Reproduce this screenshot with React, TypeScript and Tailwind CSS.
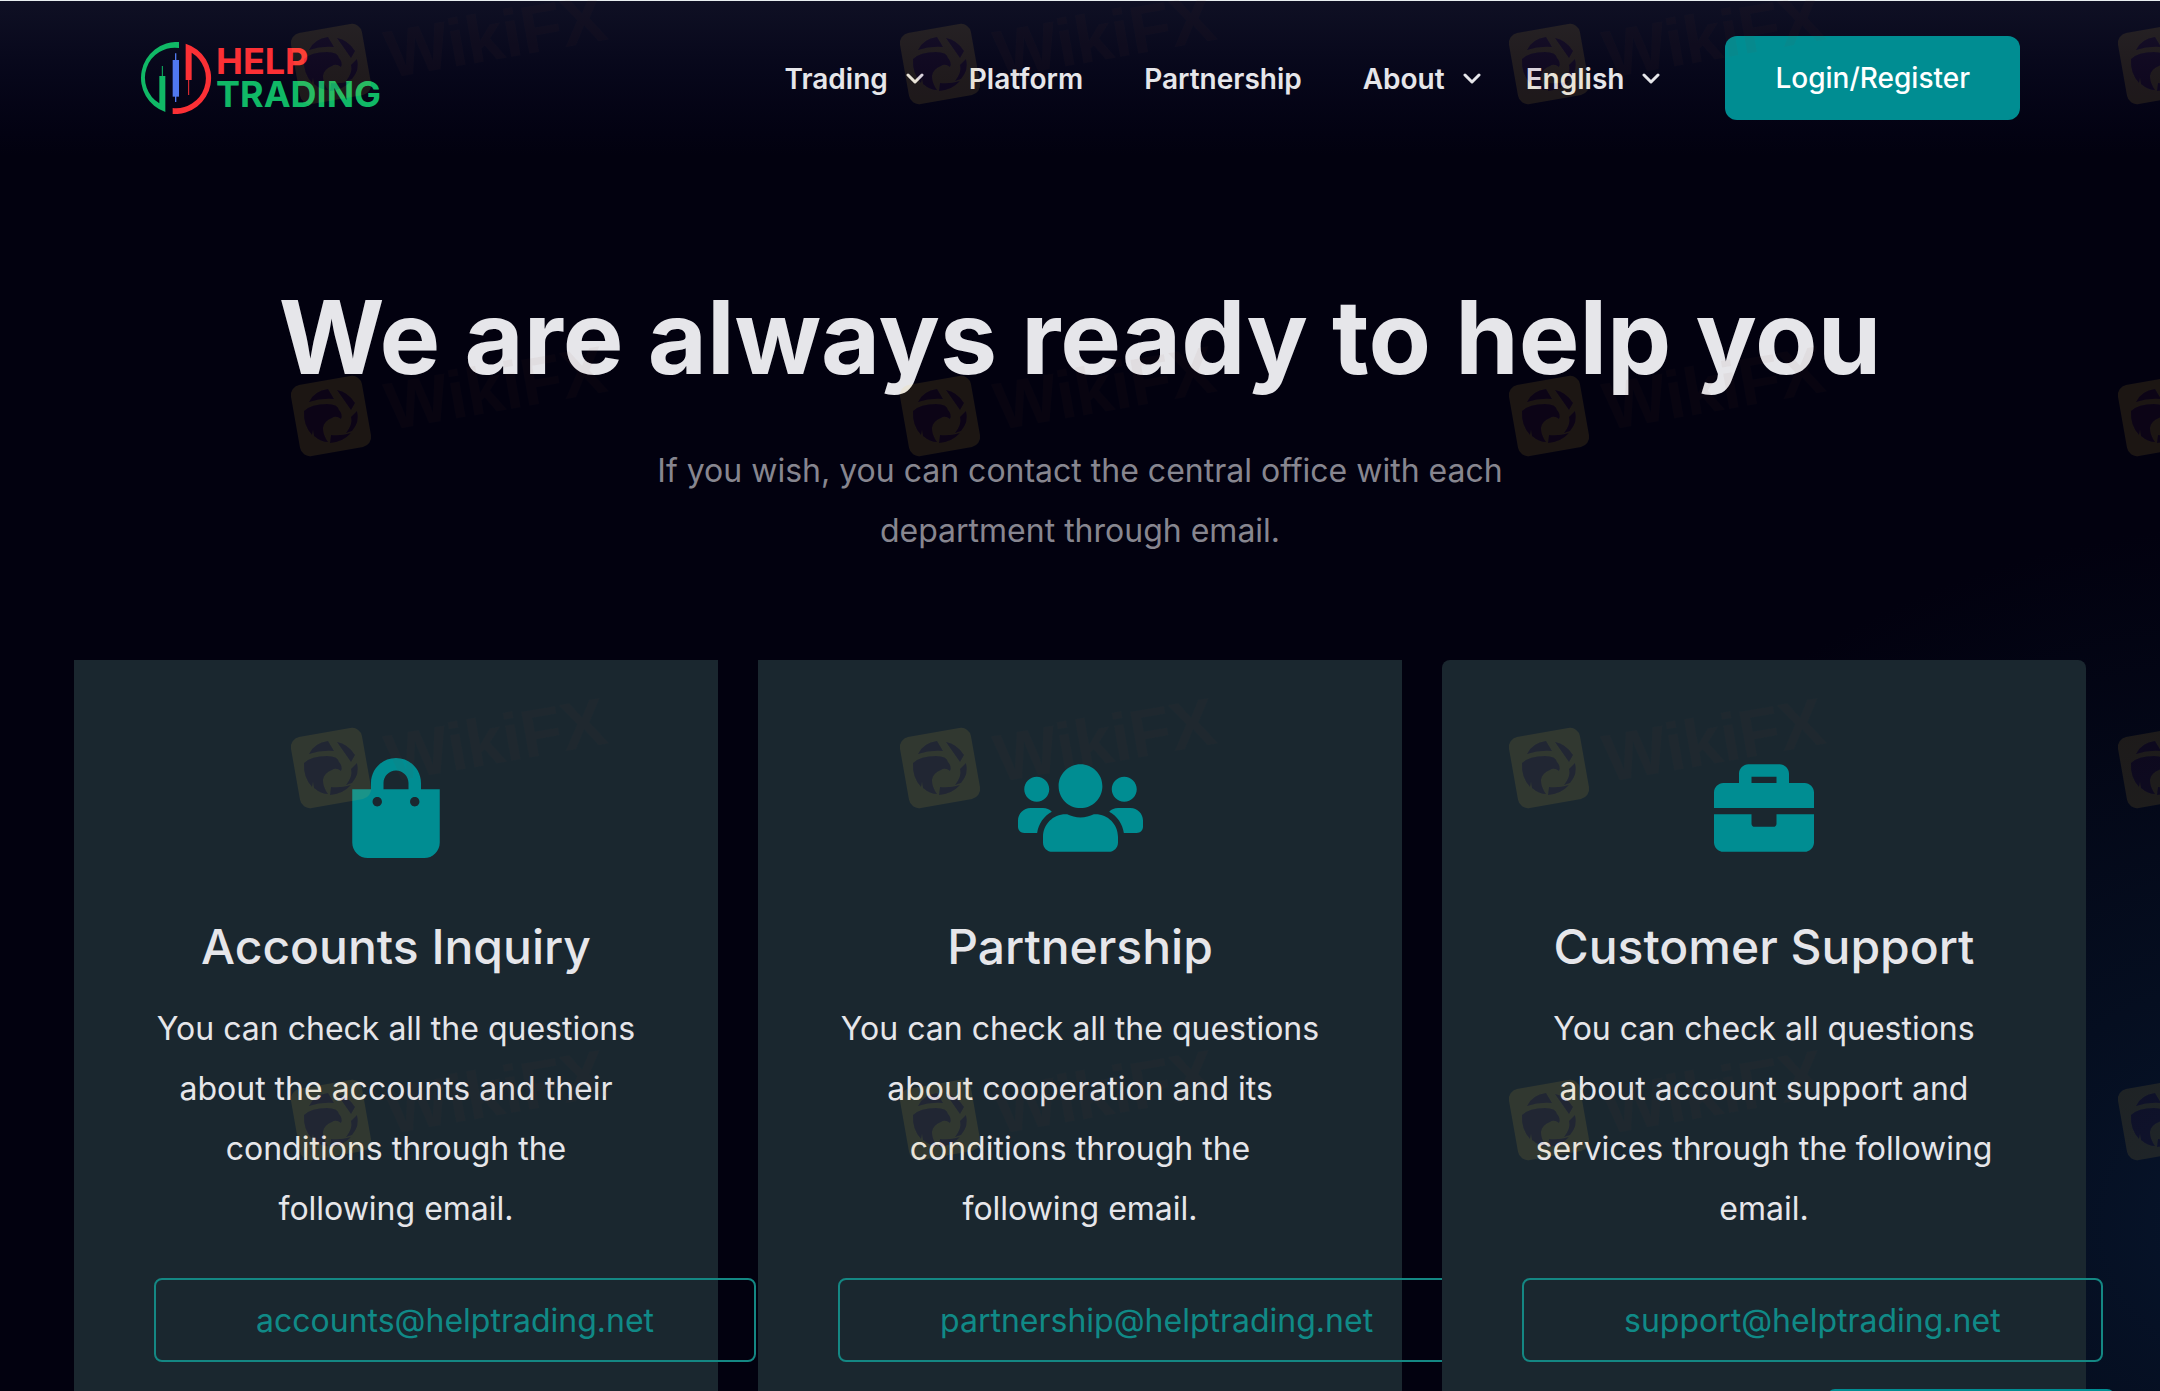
import React from "react";
import { FaBriefcase, FaShoppingBag, FaUsers } from "react-icons/fa";
import type { IconType } from "react-icons";

type Contact = {
  title: string;
  text: string;
  email: string;
  icon: IconType;
  iconClass: string;
  cardClass: string;
};

const contacts: Contact[] = [
  {
    title: "Accounts Inquiry",
    text: "You can check all the questions about the accounts and their conditions through the following email.",
    email: "accounts@helptrading.net",
    icon: FaShoppingBag,
    iconClass: "h-[100px] w-[88px]",
    cardClass: "",
  },
  {
    title: "Partnership",
    text: "You can check all the questions about cooperation and its conditions through the following email.",
    email: "partnership@helptrading.net",
    icon: FaUsers,
    iconClass: "h-[100px] w-[125px]",
    cardClass: "",
  },
  {
    title: "Customer Support",
    text: "You can check all questions about account support and services through the following email.",
    email: "support@helptrading.net",
    icon: FaBriefcase,
    iconClass: "h-[100px] w-[100px]",
    cardClass: "rounded-lg",
  },
];

const birdPath =
  "M-22 -14Q-17 -25 -3 -27L3 -17Q-10 -18 -22 -14ZM6 -26Q17 -24 24 -13L20 -6ZM26 -5Q29 6 21 15L15 17Q22 8 20 1ZM0 19Q10 20 20 17Q12 26 -1 27ZM-27 -5Q-20 -12 -4 -12Q7 -12 8 -6Q12 -2 10 3Q5 -1 1 2Q-7 5 -8 12Q-8 19 -3 26Q-10 26 -17 20L-18 14L-19 19Q-28 9 -27 -5Z";

function Chevron() {
  return (
    <svg viewBox="0 0 18 12" className="h-3 w-[18px]" fill="none" aria-hidden="true">
      <path d="M2 2l7 7 7-7" stroke="currentColor" strokeWidth="3" strokeLinecap="round" strokeLinejoin="round" />
    </svg>
  );
}

function LogoMark() {
  return (
    <svg viewBox="60 126 216 216" className="size-[72px]" aria-hidden="true">
      <path
        d="M177 126A108 108 0 0 0 136 336V228H118V310A90 90 0 0 1 177 144Z"
        fill="#10b866"
      />
      <path d="M127 198V230" stroke="#10b866" strokeWidth="3" />
      <path d="M158 180h19v110h-19z" fill="#5078f0" />
      <path d="M167 160V306" stroke="#5078f0" strokeWidth="4" />
      <path
        d="M197 131A108 108 0 0 1 158 342V324A90 90 0 0 0 215 158V240H197Z"
        fill="#fb3035"
      />
      <path d="M206 238V285" stroke="#fb3035" strokeWidth="3" />
    </svg>
  );
}

function Watermark() {
  return (
    <svg className="pointer-events-none absolute inset-0 z-20 size-full" aria-hidden="true">
      <defs>
        <g id="wm">
          <g transform="translate(331 64)">
            <mask id="wm-bird">
              <rect x="-50" y="-50" width="100" height="100" fill="#fff" />
              <path d={birdPath} fill="#000" />
            </mask>
            <g mask="url(#wm-bird)">
              <rect
                x="-36"
                y="-36"
                width="72"
                height="72"
                rx="10"
                transform="rotate(-10)"
                fill="#ffd23c"
                fillOpacity="0.1"
              />
            </g>
            <path d={birdPath} fill="#641e5a" fillOpacity="0.1" />
          </g>
          <text
            transform="translate(390 78) rotate(-10)"
            className="font-['Liberation_Sans'] text-[67px] font-bold"
            fill="#78321e"
            fillOpacity="0.05"
          >
            WikiFX
          </text>
        </g>
        <pattern id="wm-tile" width="609" height="352" patternUnits="userSpaceOnUse">
          <use href="#wm" />
          <use href="#wm" x="-609" />
          <use href="#wm" y="352" />
        </pattern>
      </defs>
      <rect width="100%" height="100%" fill="url(#wm-tile)" />
    </svg>
  );
}

export default function App() {
  return (
    <div className="relative flex h-screen flex-col overflow-hidden bg-[#02010f] bg-[radial-gradient(ellipse_800px_700px_at_105%_88%,#07152c_0%,#050e20_35%,#02010f_100%)] font-['Inter',sans-serif] text-[#e6e6ea]">
      <header className="flex shrink-0 items-center justify-between border-t border-[#e8eef0] bg-linear-to-b from-[#0f1024] to-[#02010f] px-[140px] pt-[35px] pb-9">
        <a href="#home" className="flex items-center gap-1 font-bold" aria-label="Help Trading">
          <LogoMark />
          <span className="flex flex-col text-[36px] leading-[33px] font-bold">
            <span className="text-[#fb3035]">HELP</span>
            <span className="text-[#10b866]">TRADING</span>
          </span>
        </a>
        <div className="flex items-center gap-[65px]">
          <nav className="flex items-center gap-[61px] pt-0.5 text-[28px] leading-10 font-semibold">
            <button className="-mr-4 flex items-center gap-[18px]">
              Trading
              <Chevron />
            </button>
            <a href="#platform">Platform</a>
            <a href="#partnership">Partnership</a>
            <button className="-mr-4 flex items-center gap-[18px]">
              About
              <Chevron />
            </button>
            <button className="flex items-center gap-[18px]">
              English
              <Chevron />
            </button>
          </nav>
          <a
            href="#login"
            className="rounded-xl bg-[#008d92] px-[50px] py-[22px] text-[28px] leading-10 font-medium text-white"
          >
            Login/Register
          </a>
        </div>
      </header>

      <main className="flex flex-col items-center px-[74px]">
        <h1 className="mt-[116px] text-center text-[102px] leading-[130px] font-bold">
          We are always ready to help you
        </h1>
        <p className="mt-[39px] max-w-[900px] text-center text-[32px] leading-[60px] text-[#87868f]">
          If you wish, you can contact the central office with each department through email.
        </p>
        <section className="mt-[99px] grid w-full grid-cols-3 gap-10">
          {contacts.map(({ title, text, email, icon: Icon, iconClass, cardClass }) => (
            <article
              key={title}
              className={`flex min-w-0 flex-col items-center bg-[#1a272f] px-20 pt-[98px] pb-20 ${cardClass}`}
            >
              <Icon className={`text-[#008d92] ${iconClass}`} />
              <h2 className="mt-[59px] text-center text-[48px] leading-[60px] font-medium whitespace-nowrap">
                {title}
              </h2>
              <p className="mt-[22px] text-center text-[32px] leading-[60px]">{text}</p>
              <a
                href={`mailto:${email}`}
                className="mt-[39px] self-start rounded-lg border-2 border-[#148783] px-[100px] pt-[21px] pb-[19px] text-[32px] leading-10 whitespace-nowrap text-[#108a87]"
              >
                {email}
              </a>
            </article>
          ))}
        </section>
      </main>

      <button
        aria-label="Open chat"
        className="absolute right-[45px] -bottom-[58px] z-10 h-15 w-[288px] rounded-t-lg bg-[#008d92]"
      />
      <Watermark />
    </div>
  );
}
